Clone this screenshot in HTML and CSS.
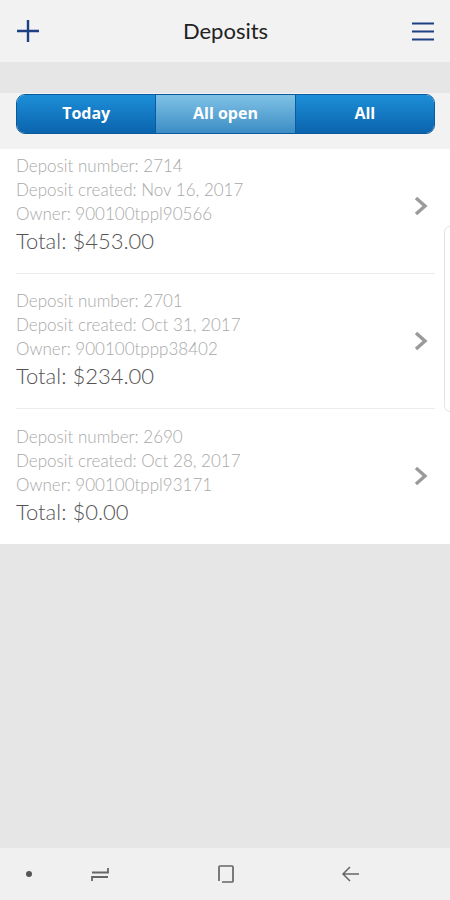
FILE: index.html
```html
<!DOCTYPE html>
<html lang="en">
<head>
    <meta charset="UTF-8">
    <meta name="viewport" content="width=device-width, initial-scale=1.0">
    <title>Deposits</title>
    <link rel="stylesheet" href="styles.css">
</head>
<body>
    <div class="header">
        <button class="icon-btn" title="New deposit">
            <svg width="26" height="26" viewBox="0 0 26 26"><path d="M13 2V24M2 13H24" stroke="#1d3f83" stroke-width="2.4" fill="none"/></svg>
        </button>
        <div class="title">Deposits</div>
        <button class="icon-btn" title="Menu">
            <svg width="24" height="24" viewBox="0 0 24 24"><path d="M1 4.5H23M1 12.5H23M1 20.5H23" stroke="#1d3f83" stroke-width="2.2" fill="none"/></svg>
        </button>
    </div>
    <div class="band"></div>
    <div class="filter-bar">
        <div class="segments">
            <button class="segment">Today</button>
            <button class="segment active">All open</button>
            <button class="segment">All</button>
        </div>
    </div>

    <div class="list">
        <div class="deposits">
            <div class="deposit">
                <div class="info">
                    <div class="line">Deposit number: 2714</div>
                    <div class="line">Deposit created: Nov 16, 2017</div>
                    <div class="line">Owner: 900100tppl90566</div>
                    <div class="total">Total: $453.00</div>
                </div>
                <svg class="chevron" width="18" height="22" viewBox="0 0 18 22"><path d="M4 3L13 11L4 19" stroke="#9a9a9a" stroke-width="3.4" fill="none"/></svg>
            </div>
            <div class="deposit">
                <div class="info">
                    <div class="line">Deposit number: 2701</div>
                    <div class="line">Deposit created: Oct 31, 2017</div>
                    <div class="line">Owner: 900100tppp38402</div>
                    <div class="total">Total: $234.00</div>
                </div>
                <svg class="chevron" width="18" height="22" viewBox="0 0 18 22"><path d="M4 3L13 11L4 19" stroke="#9a9a9a" stroke-width="3.4" fill="none"/></svg>
            </div>
            <div class="deposit">
                <div class="info">
                    <div class="line">Deposit number: 2690</div>
                    <div class="line">Deposit created: Oct 28, 2017</div>
                    <div class="line">Owner: 900100tppl93171</div>
                    <div class="total">Total: $0.00</div>
                </div>
                <svg class="chevron" width="18" height="22" viewBox="0 0 18 22"><path d="M4 3L13 11L4 19" stroke="#9a9a9a" stroke-width="3.4" fill="none"/></svg>
            </div>
        </div>
        <div class="edge-handle"></div>
    </div>

    <div class="spacer"></div>

    <div class="navbar">
        <span class="dot"></span>
        <svg class="nav-recent" width="22" height="22" viewBox="0 0 22 22"><path d="M3 9.5H19V5M19 14H3V18" stroke="#666" stroke-width="1.8" fill="none"/></svg>
        <svg class="nav-home" width="22" height="22" viewBox="0 0 22 22"><path d="M7 19H17Q18 19 18 18V4Q18 3 17 3H5Q4 3 4 4V18" stroke="#666" stroke-width="1.7" fill="none"/></svg>
        <svg class="nav-back" width="22" height="22" viewBox="0 0 22 22"><path d="M19 11H3M10 4L3 11L10 18" stroke="#666" stroke-width="1.5" fill="none"/></svg>
    </div>
</body>
</html>
```

FILE: styles.css
```css
body {
    margin: 0;
    padding: 0;
    width: 450px;
    height: 900px;
    display: flex;
    flex-direction: column;
    background-color: #e6e6e6;
    font-family: Lato, "Open Sans", sans-serif;
}

.header {
    height: 62px;
    background-color: #f2f2f2;
    display: flex;
    align-items: center;
    justify-content: space-between;
    padding: 0 14px 0 15px;
    box-sizing: border-box;
}

.icon-btn {
    border: none;
    background: none;
    padding: 0;
    width: 26px;
    height: 26px;
    display: flex;
    align-items: center;
    justify-content: center;
}

.title {
    font-size: 22px;
    color: #222;
    padding-bottom: 2px;
}

.band {
    height: 31px;
    background-color: #e6e6e6;
}

.filter-bar {
    background-color: #f2f2f2;
    padding: 1px 15px 15px 16px;
}

.segments {
    display: flex;
    height: 38px;
    border-radius: 9px;
    overflow: hidden;
    border: 1px solid #0b5a9c;
}

.segment {
    flex: 1;
    border: none;
    color: #fff;
    font-family: "Open Sans", sans-serif;
    font-weight: bold;
    font-size: 16px;
    background: linear-gradient(#1d8ed8, #0a64ad);
    padding: 0 0 2px 0;
}

.segment + .segment {
    border-left: 1px solid #0a5c9e;
}

.segment.active {
    background: linear-gradient(#80c2e6, #3c8dc5);
}

/* list is scrolled down a little, first row partly hidden */
.list {
    background-color: #fff;
    position: relative;
    overflow: hidden;
}

.deposits {
    margin-top: -10px;
}

.deposit {
    display: flex;
    align-items: center;
    height: 135px;
    margin-left: 16px;
    margin-right: 15px;
    border-bottom: 1px solid #ececec;
    box-sizing: border-box;
}

.deposit:last-child {
    border-bottom: none;
}

.info {
    flex: 1;
    padding-bottom: 2px;
}

.line {
    font-size: 17px;
    font-weight: 300;
    line-height: 24px;
    color: #a8a8a8;
}

.total {
    font-size: 22px;
    font-weight: 300;
    line-height: 30px;
    color: #555;
}

.chevron {
    margin-right: 5px;
    margin-bottom: 1px;
}

.edge-handle {
    position: absolute;
    right: -6px;
    top: 77px;
    width: 10px;
    height: 184px;
    border: 1px solid #e4e4e4;
    border-radius: 6px;
    background-color: #fff;
}

.spacer {
    flex: 1;
}

.navbar {
    height: 52px;
    background-color: #f0f0f0;
    display: flex;
    align-items: center;
    padding-left: 26px;
}

.dot {
    width: 6px;
    height: 6px;
    border-radius: 50%;
    background-color: #555;
}

.nav-recent {
    margin-left: 57px;
}

.nav-home {
    margin-left: 104px;
}

.nav-back {
    margin-left: 103px;
}
```
